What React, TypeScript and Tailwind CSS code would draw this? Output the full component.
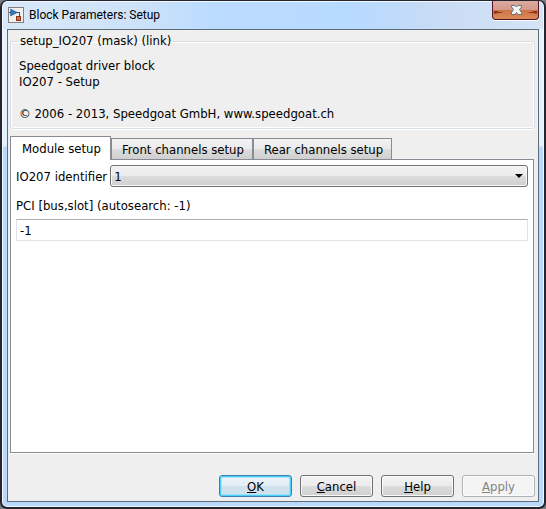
import { useState } from "react";

const TABS = ["Module setup", "Front channels setup", "Rear channels setup"];

function BlockIcon() {
  return (
    <svg width="16" height="16" viewBox="0 0 16 16" shapeRendering="crispEdges" aria-hidden="true">
      <rect x="0.5" y="0.5" width="15" height="15" fill="#f1eeee" stroke="#857f80" />
      <path d="M1 5.500H3M9 5.500H11.500V9" fill="none" stroke="#40506a" />
      <path d="M2.500 2L9.500 5.500L2.500 9Z" fill="#2f76b4" stroke="#235a94" strokeWidth="0.5" shapeRendering="auto" />
      <rect x="8.500" y="9.500" width="4" height="4" fill="#c9704f" stroke="#8e3412" />
    </svg>
  );
}

function CloseGlyph() {
  return (
    <svg width="45" height="18" viewBox="0 0 45 18" aria-hidden="true">
      <path d="M1 10H4L6 11H10L8 12H5L1 13ZM44 10H41L39 11H35L37 12H40L44 13Z" fill="#94300f" />
      <path
        d="M18.500 4.500H22L23.500 6L25 4.500H28.500V6L26.500 8.500L28.500 11.500V13.500H25L23.500 11.500L22 13.500H18.500V11.500L20.500 8.500L18.500 6Z"
        fill="#f4f4f4"
        stroke="#66727e"
      />
    </svg>
  );
}

function ActionButton({ label, kind = "normal" }: { label: string; kind?: "normal" | "default" | "disabled" }) {
  const look = {
    normal:
      "border-[#707070] bg-[linear-gradient(#f3f3f3_0%,#ebebeb_50%,#dddddd_50%,#cfcfcf_100%)] text-black shadow-[inset_0_0_0_1px_#f9f9f9]",
    default:
      "border-[#3c7fb1] bg-[linear-gradient(#eef5fa_0%,#e2edf5_50%,#d2e3ef_50%,#cddfea_100%)] text-black shadow-[inset_0_0_0_1px_#48d0f8,inset_0_0_0_2px_#a5e2f7]",
    disabled: "border-[#adb2b5] bg-[#f4f4f4] text-[#838383] shadow-[inset_0_0_0_1px_#fcfcfc]",
  }[kind];
  return (
    <button
      type="button"
      disabled={kind === "disabled"}
      className={`h-[22px] w-[73px] rounded-[3px] border pt-[2px] ${look}`}
    >
      <span className="underline underline-offset-1">{label[0]}</span>
      {label.slice(1)}
    </button>
  );
}

export default function App() {
  const [active, setActive] = useState(0);
  const [slot, setSlot] = useState("-1");
  return (
    <div className="min-h-screen bg-[#777b80] font-['DejaVu_Sans_Condensed','DejaVu_Sans',sans-serif] text-[13px] leading-4 text-black">
      <div className="flex min-h-screen flex-col rounded-[7px] border-2 border-t border-[#25252f] bg-[linear-gradient(#e8f3fe_0px,#e3f0fe_145px,#b9d8fb_146px)] px-[5px] pb-[5px] shadow-[inset_0_0_0_1px_#f2f8ff]">
        <header className="-mx-[4px] mt-px flex h-[27px] items-start justify-between rounded-t-[5px] bg-[linear-gradient(90deg,#d8e8f8_0%,#cde2f8_25%,#bbdcff_38%,#b7daff_65%,#c8dcf5_80%,#d6e3f5_100%)] pl-[5px] pr-[4px]">
          <div className="flex items-center gap-[5px] pt-[5px]">
            <BlockIcon />
            <h1 className="font-['Roboto',sans-serif] text-[12px] leading-4">Block Parameters: Setup</h1>
          </div>
          <button
            type="button"
            aria-label="Close"
            className="-mt-px h-[19px] w-[47px] overflow-hidden rounded-b-[4px] border border-t-0 border-[#551429] bg-[linear-gradient(#dcaaa2_0%,#d49a88_48%,#c9744b_50%,#dc8b55_100%)] shadow-[0_1px_0_#ffffff]"
          >
            <CloseGlyph />
          </button>
        </header>

        <main className="flex grow flex-col border border-[#5d6d78] bg-[#efefef] pb-[4px] pl-[2px] pr-[3px] pt-[3px]">
          <fieldset className="h-[96px] rounded-[3px] border border-[#d5dfe5] pl-[8px] shadow-[inset_0_0_0_1px_#ffffff,0_1px_0_#ffffff]">
            <legend className="px-px">setup_IO207 (mask) (link)</legend>
            <p className="pt-[9px]">Speedgoat driver block</p>
            <p>IO207 - Setup</p>
            <p className="pt-4">© 2006 - 2013, Speedgoat GmbH, www.speedgoat.ch</p>
          </fieldset>

          <div role="tablist" className="mt-[7px] flex items-end">
            {TABS.map((t, i) => (
              <button
                key={t}
                type="button"
                role="tab"
                aria-selected={i === active}
                onClick={() => setActive(i)}
                className={
                  i === active
                    ? "relative -mb-px h-[24px] border border-b-0 border-[#898c95] bg-white pl-[11px] pr-[9px] pt-px"
                    : "h-[21px] border border-b-0 border-[#898c95] bg-[linear-gradient(#f2f2f2_0%,#ebebeb_50%,#dddddd_50%,#cfcfcf_100%)] pl-[10px] pr-[8px] pt-[2px]"
                }
              >
                {t}
              </button>
            ))}
          </div>

          <section className="mr-px flex grow flex-col border border-[#898c95] bg-white px-[5px] pt-[5px] shadow-[0_1px_0_#ffffff]">
            <div className="flex items-center gap-[3px]">
              <label htmlFor="identifier" className="pt-[2px]">
                IO207 identifier
              </label>
              <div className="relative grow">
                <select
                  id="identifier"
                  className="block h-[22px] w-full appearance-none rounded-[3px] border border-[#707070] bg-[linear-gradient(#f2f2f2_0%,#ebebeb_50%,#dddddd_50%,#cfcfcf_100%)] pl-[3px] pt-[2px] shadow-[inset_0_0_0_1px_#f9f9f9]"
                >
                  <option>1</option>
                  <option>2</option>
                </select>
                <svg width="8" height="4" viewBox="0 0 8 4" className="pointer-events-none absolute right-[5px] top-[9px]" aria-hidden="true">
                  <path d="M0 0H8L4 4Z" fill="#000" />
                </svg>
              </div>
            </div>
            <label htmlFor="slot" className="mt-[11px]">
              PCI [bus,slot] (autosearch: -1)
            </label>
            <input
              id="slot"
              value={slot}
              onChange={(e) => setSlot(e.target.value)}
              className="mt-[5px] h-[22px] w-full border border-[#e2e3ea] border-t-[#abadb3] bg-white pl-[3px] outline-none"
            />
          </section>

          <footer className="mt-[22px] flex justify-end gap-2">
            <ActionButton label="OK" kind="default" />
            <ActionButton label="Cancel" />
            <ActionButton label="Help" />
            <ActionButton label="Apply" kind="disabled" />
          </footer>
        </main>
      </div>
    </div>
  );
}
